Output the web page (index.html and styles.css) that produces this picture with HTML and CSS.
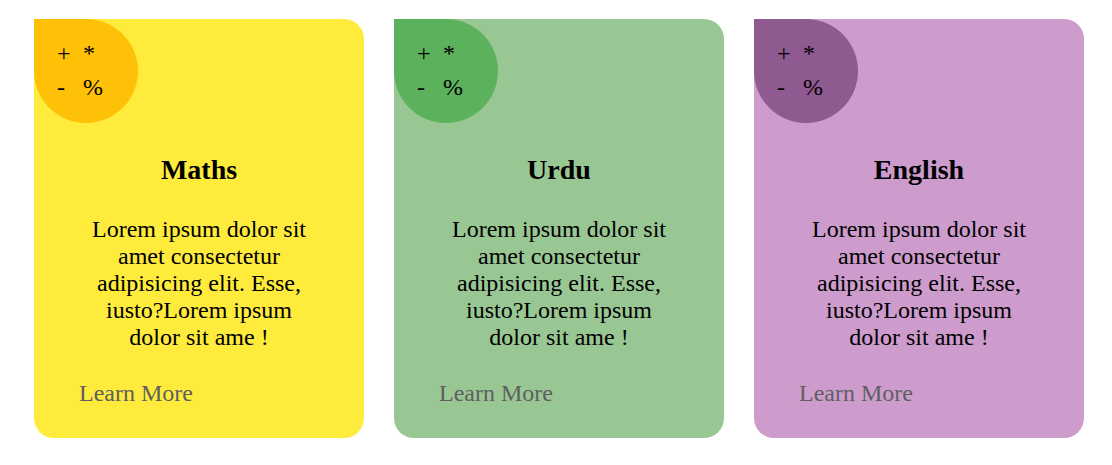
FILE: index.html
```html
<!DOCTYPE html>
<html>
<head>
<meta charset="utf-8">
<link rel="stylesheet" href="styles.css">
</head>
<body>
<div class="cards">
  <div class="card yellow">
    <div class="badge"><span>+</span><span>*</span><span>-</span><span>%</span></div>
    <h2 class="title">Maths</h2>
    <p class="text">Lorem ipsum dolor sit amet consectetur adipisicing elit. Esse, iusto?Lorem ipsum dolor sit ame !</p>
    <a class="more">Learn More</a>
  </div>
  <div class="card green">
    <div class="badge"><span>+</span><span>*</span><span>-</span><span>%</span></div>
    <h2 class="title">Urdu</h2>
    <p class="text">Lorem ipsum dolor sit amet consectetur adipisicing elit. Esse, iusto?Lorem ipsum dolor sit ame !</p>
    <a class="more">Learn More</a>
  </div>
  <div class="card purple">
    <div class="badge"><span>+</span><span>*</span><span>-</span><span>%</span></div>
    <h2 class="title">English</h2>
    <p class="text">Lorem ipsum dolor sit amet consectetur adipisicing elit. Esse, iusto?Lorem ipsum dolor sit ame !</p>
    <a class="more">Learn More</a>
  </div>
</div>
</body>
</html>
```
FILE: styles.css
```css
html, body { margin: 0; padding: 0; background: #fff; }
body { font-family: "Liberation Serif", "Times New Roman", serif; color: #000; }
.cards { display: flex; gap: 30px; padding: 19px 0 0 34px; }
.card {
  width: 330px; height: 419px; box-sizing: border-box;
  border-radius: 0 20px 20px 20px;
  display: flex; flex-direction: column; align-items: center;
}
.yellow { background: #ffeb3b; }
.yellow .badge { background: #ffc107; }
.green { background: #99c794; }
.green .badge { background: #5cb15c; }
.purple { background: #ce9bcd; }
.purple .badge { background: #8e5a90; }
.badge {
  align-self: flex-start;
  width: 104px; height: 104px; box-sizing: border-box;
  border-radius: 0 50% 50% 50%;
  display: grid; grid-template-columns: 26px auto; grid-auto-rows: 34px;
  align-content: start; align-items: center;
  padding: 17px 0 0 23px;
  font-size: 24px;
}
.title { margin: 31px 0 0; font-size: 28px; line-height: 32px; font-weight: bold; }
.text {
  margin: 30px 0 0; padding: 0 50px;
  font-size: 24px; line-height: 27px; text-align: center;
}
.more {
  align-self: flex-start; margin: 29px 0 0 45px;
  font-size: 24px; line-height: 27px; color: #5f5f5f;
}
```
